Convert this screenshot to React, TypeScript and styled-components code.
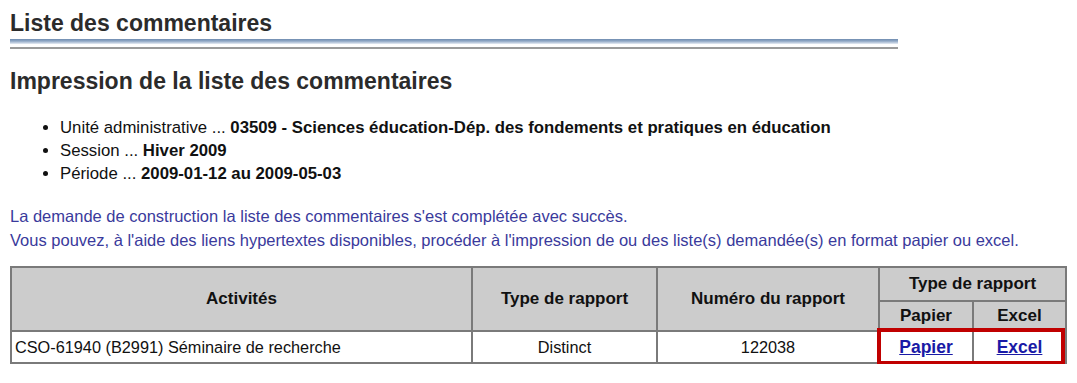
import React from 'react';
import styled, { createGlobalStyle } from 'styled-components';

const GlobalStyle = createGlobalStyle`
  html, body {
    margin: 0;
    padding: 0;
    background: #fff;
  }
  body {
    font-family: 'Liberation Sans', Arial, sans-serif;
    color: #000;
  }
`;

const Page = styled.div`
  padding: 10px 10px 0 10px;
  width: 1057px;
  box-sizing: border-box;
`;

const Title = styled.h1`
  margin: 0;
  font-size: 23px;
  line-height: 26px;
  font-weight: bold;
  color: #2b2b2b;
`;

const Rule = styled.div`
  width: 888px;
  margin-top: 3px;
  height: 11px;
  background:
    linear-gradient(#9a9a9a, #9a9a9a) 0 8px / 100% 2px no-repeat,
    linear-gradient(#6f8cb0, #8ea6c4 40%, #c8d4e4 80%, #e8edf4) 0 0 / 100% 5px no-repeat;
`;

const Subtitle = styled.h2`
  margin: 18px 0 0 0;
  font-size: 23px;
  line-height: 26px;
  font-weight: bold;
  color: #2b2b2b;
`;

const Criteria = styled.ul`
  margin: 22px 0 0 0;
  padding-left: 50px;
  list-style: disc;
  font-size: 16.75px;
  line-height: 23px;
  color: #111;
`;

const Value = styled.b`
  font-weight: bold;
`;

const Message = styled.p`
  margin: 19px 0 0 0;
  font-size: 16.5px;
  line-height: 24px;
  color: #3a3a9c;
`;

const TableWrap = styled.div`
  position: relative;
  margin-top: 14px;
  width: 1057px;
`;

const Table = styled.table`
  width: 100%;
  border-collapse: collapse;
  border: 2px solid #6e6e6e;
  font-size: 16.3px;
`;

const Col = styled.col<{ $w: number }>`
  width: ${(p) => p.$w}px;
`;

const Th = styled.th<{ $h: number }>`
  background: #cccccc;
  border: 2px solid #7a7a7a;
  height: ${(p) => p.$h}px;
  padding: 0 4px;
  font-size: 17px;
  font-weight: bold;
  color: #111;
  text-align: center;
`;

const Td = styled.td<{ $align?: 'left' | 'center' }>`
  border: 2px solid #7a7a7a;
  height: 30px;
  padding: 0 3px;
  text-align: ${(p) => p.$align ?? 'center'};
  color: #111;
  background: #fff;
`;

const Link = styled.a`
  color: #1a1aa6;
  font-size: 17.5px;
  font-weight: bold;
  text-decoration: underline;
  cursor: pointer;
`;

const Highlight = styled.div`
  position: absolute;
  left: 867px;
  top: 62px;
  width: 188px;
  height: 37px;
  border: 4px solid #c00000;
  box-sizing: border-box;
  pointer-events: none;
`;

export default function App() {
  return (
    <Page>
      <GlobalStyle />
      <Title>Liste des commentaires</Title>
      <Rule />
      <Subtitle>Impression de la liste des commentaires</Subtitle>
      <Criteria>
        <li>
          Unité administrative ... <Value>03509 - Sciences éducation-Dép. des fondements et pratiques en éducation</Value>
        </li>
        <li>
          Session ... <Value>Hiver 2009</Value>
        </li>
        <li>
          Période ... <Value>2009-01-12 au 2009-05-03</Value>
        </li>
      </Criteria>
      <Message>
        La demande de construction la liste des commentaires s'est complétée avec succès.
        <br />
        Vous pouvez, à l'aide des liens hypertextes disponibles, procéder à l'impression de ou des liste(s) demandée(s) en format papier ou excel.
      </Message>
      <TableWrap>
        <Table>
          <colgroup>
            <Col $w={461} />
            <Col $w={185} />
            <Col $w={222} />
            <Col $w={94} />
            <Col $w={93} />
          </colgroup>
          <thead>
            <tr>
              <Th $h={32} rowSpan={2}>Activités</Th>
              <Th $h={32} rowSpan={2}>Type de rapport</Th>
              <Th $h={32} rowSpan={2}>Numéro du rapport</Th>
              <Th $h={32} colSpan={2}>Type de rapport</Th>
            </tr>
            <tr>
              <Th $h={28}>Papier</Th>
              <Th $h={28}>Excel</Th>
            </tr>
          </thead>
          <tbody>
            <tr>
              <Td $align="left">CSO-61940 (B2991) Séminaire de recherche</Td>
              <Td>Distinct</Td>
              <Td>122038</Td>
              <Td>
                <Link>Papier</Link>
              </Td>
              <Td>
                <Link>Excel</Link>
              </Td>
            </tr>
          </tbody>
        </Table>
        <Highlight />
      </TableWrap>
    </Page>
  );
}
